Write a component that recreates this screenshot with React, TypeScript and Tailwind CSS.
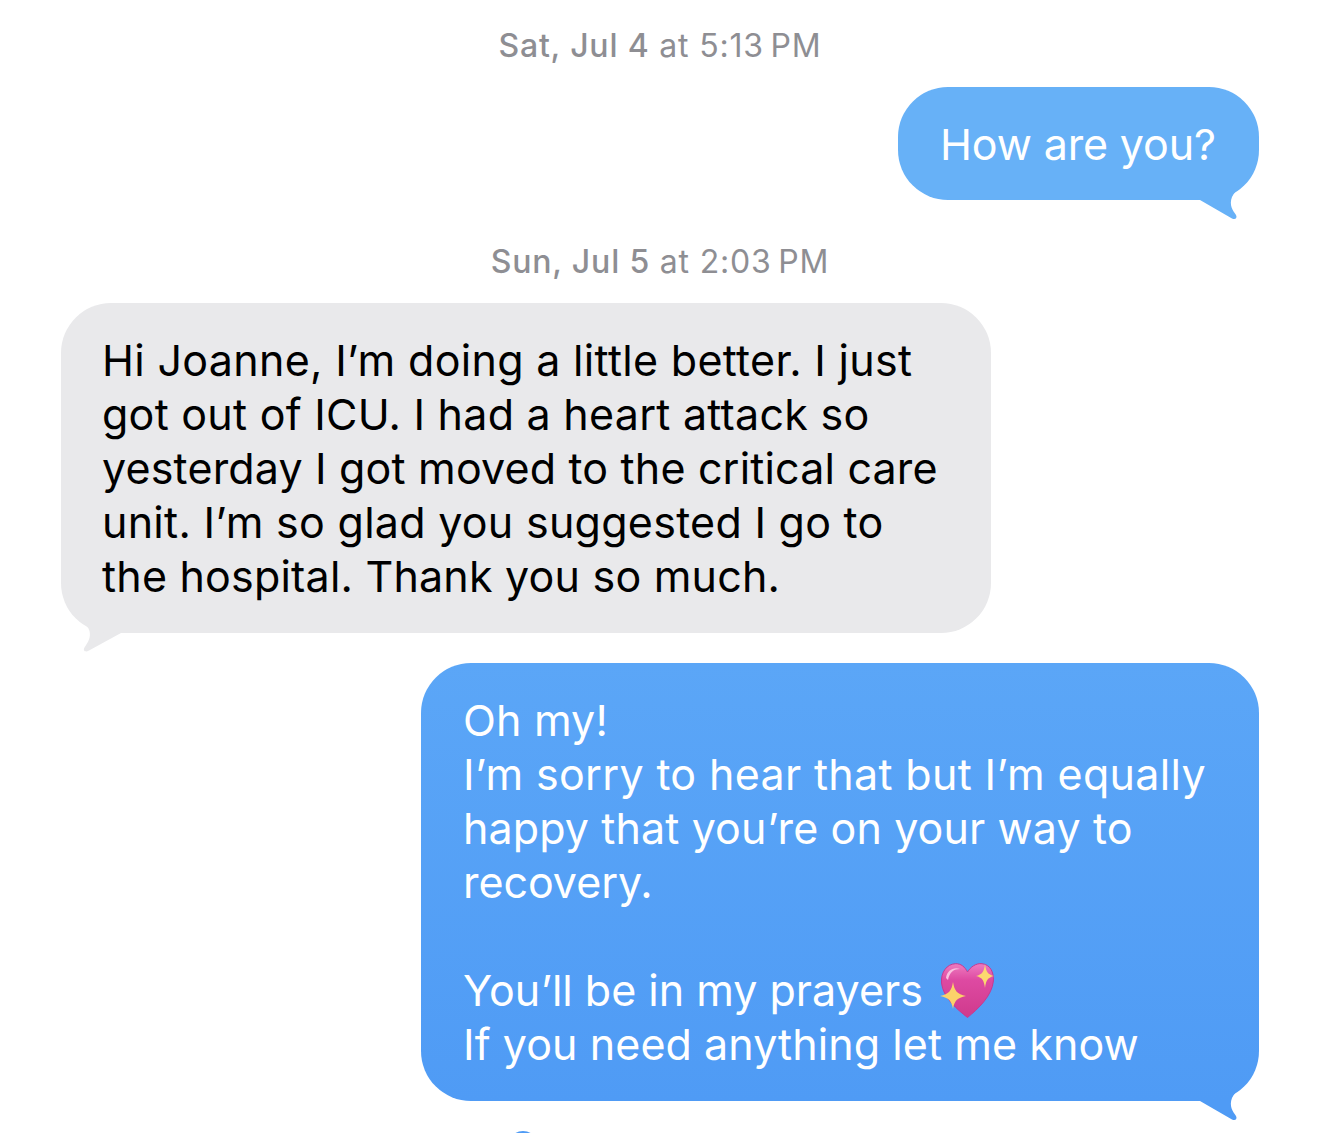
import React from "react";

function Stamp({ day, time }: { day: string; time: string }) {
  return (
    <div className="text-center text-[32px] leading-[40px] text-[#8e8e93] tracking-[0.82px]">
      <span className="font-medium">{day}</span> at {time}
    </div>
  );
}

function BlueTail({ color }: { color: string }) {
  return (
    <svg className="absolute right-0 bottom-[-20px]" width="70" height="50" viewBox="0 0 70 50">
      <path
        d="M11 30 L43 48.5 C46.5 50 48.5 48 47 45 C43.5 40 40 35 43 27 C44.5 23.5 47.5 21 50 18 L50 0 L11 0 Z"
        fill={color}
      />
    </svg>
  );
}

function GrayTail() {
  return (
    <svg className="absolute left-0 bottom-[-20px]" width="70" height="50" viewBox="0 0 70 50">
      <path
        d="M60 30 L28 47.5 C24.5 49.5 21.5 48 23.5 44.5 C27 39 30 35 28.5 28 C27.5 24 24.5 22 21 18 L21 0 L60 0 Z"
        fill="#e9e9eb"
      />
    </svg>
  );
}

function SparkleHeart() {
  return (
    <svg className="absolute left-[519px] top-[298px]" width="56" height="58" viewBox="0 0 56 58">
      <defs>
        <linearGradient id="heartFill" x1="0" y1="0" x2="0" y2="1">
          <stop offset="0" stopColor="#ee7cc0" />
          <stop offset="0.3" stopColor="#de4aa2" />
          <stop offset="1" stopColor="#cf3a8c" />
        </linearGradient>
      </defs>
      <path
        d="M27.5 56.5 C18 49 3 37 1.5 22 C0.7 11 7 3 15.5 2.7 C21 2.5 25 6 27.5 11 C30.5 6 36 2 42 2.7 C50 3.5 54 11 53.4 20 C52 35 38 48 27.5 56.5 Z"
        fill="url(#heartFill)"
        stroke="#c43a92"
        strokeWidth="1"
      />
      <path d="M6 17 C7 9 14 5.5 20 8 C14 8 9.5 11 8 19 Z" fill="#f9c0e0" />
      <path
        d="M13 21 C14.5 30 17 33 26 35 C17 37 14.5 39.5 13 48 C11.5 39.5 9 37 0 35 C9 33 11.5 30 13 21 Z"
        fill="#fbd26a"
      />
      <path
        d="M45 3 C46 11 48 13.500 54 15 C48 16.500 46 19 45 27 C44 19 42 16.500 36 15 C42 13.500 44 11 45 3 Z"
        fill="#fcd86f"
      />
    </svg>
  );
}

export default function App() {
  return (
    <div
      className="w-[1320px] h-[1133px] overflow-hidden bg-white flex flex-col"
      style={{ fontFamily: "Inter, 'Noto Sans', sans-serif" }}
    >
      <div className="pt-[26px]">
        <Stamp day="Sat, Jul 4" time={"5:13\u2009PM"} />
      </div>

      <div className="mt-[21px] self-end mr-[61px] relative">
        <div className="relative w-[361px] h-[113px] rounded-[50px] bg-[#67b1f7] flex items-center pl-[42px] text-white text-[43px] leading-[54px] tracking-[-0.15px] whitespace-nowrap">
          How are you?
        </div>
        <BlueTail color="#67b1f7" />
      </div>

      <div className="mt-[42px]">
        <Stamp day="Sun, Jul 5" time={"2:03\u2009PM"} />
      </div>

      <div className="mt-[21px] ml-[61px] self-start relative">
        <GrayTail />
        <div className="relative w-[930px] h-[330px] rounded-[50px] bg-[#e9e9eb] pl-[41px] pt-[30px] text-black text-[43px] leading-[54px] whitespace-nowrap">
          <div className="tracking-[0.31px]">Hi Joanne, I’m doing a little better. I just</div>
          <div className="tracking-[0.25px]">got out of ICU. I had a heart attack so</div>
          <div className="tracking-[0.17px]">yesterday I got moved to the critical care</div>
          <div className="tracking-[0.27px]">unit. I’m so glad you suggested I go to</div>
          <div className="tracking-[0.2px]">the hospital. Thank you so much.</div>
        </div>
      </div>

      <div className="mt-[30px] self-end mr-[61px] relative">
        <BlueTail color="#4f9bf5" />
        <div className="relative w-[838px] h-[438px] rounded-[50px] bg-gradient-to-b from-[#5ba6f7] to-[#4f9bf5] pl-[42px] pt-[30px] text-white text-[43px] leading-[54px] whitespace-nowrap">
          <div className="tracking-[0.17px]">Oh my!</div>
          <div className="tracking-[0.33px]">I’m sorry to hear that but I’m equally</div>
          <div className="tracking-[0.11px]">happy that you’re on your way to</div>
          <div className="tracking-[-0.05px]">recovery.</div>
          <div>&nbsp;</div>
          <div>You’ll be in my prayers</div>
          <div className="tracking-[0.08px]">If you need anything let me know</div>
          <SparkleHeart />
        </div>
      </div>

      <div className="mt-[30px] ml-[508px] w-[30px] h-[30px] shrink-0 rounded-full bg-[#4f9bf5]" />
    </div>
  );
}
